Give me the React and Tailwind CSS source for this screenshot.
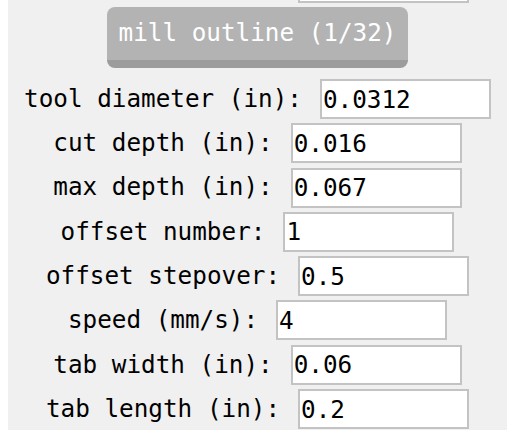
import React from "react";

const rows = [
  ["tool diameter (in):", "0.0312"],
  ["cut depth (in):", "0.016"],
  ["max depth (in):", "0.067"],
  ["offset number:", "1"],
  ["offset stepover:", "0.5"],
  ["speed (mm/s):", "4"],
  ["tab width (in):", "0.06"],
  ["tab length (in):", "0.2"],
];

export default function App() {
  return (
    <div className="w-[513px] h-[433px] bg-white overflow-hidden font-['DejaVu_Sans_Mono',monospace] text-[24.3px] text-black">
      <div className="ml-[8px] w-[499px] h-[430px] bg-[#f0f0f0] flex flex-col overflow-hidden">
        <div className="ml-[290px] w-[171px] h-[3px] bg-white border-2 border-t-0 border-[#c3c3c3]" />
        <button className="mt-[4px] self-center w-[301px] h-[61px] rounded-[8px] bg-[#b3b3b3] border-b-[8px] border-[#9c9c9c] text-white leading-none pb-[1px]">
          mill outline (1/32)
        </button>
        <div className="mt-[11px] flex flex-col gap-[4.3px]">
          {rows.map(([label, value]) => (
            <div key={label} className="flex items-center justify-center gap-[18px]">
              <span className="whitespace-pre leading-none">{label}</span>
              <input
                readOnly
                value={value}
                className="w-[171px] h-[40px] bg-white border-2 border-[#c3c3c3] pl-[1px] outline-none font-['DejaVu_Sans_Mono',monospace] text-[24.3px] text-black"
              />
            </div>
          ))}
        </div>
      </div>
    </div>
  );
}
